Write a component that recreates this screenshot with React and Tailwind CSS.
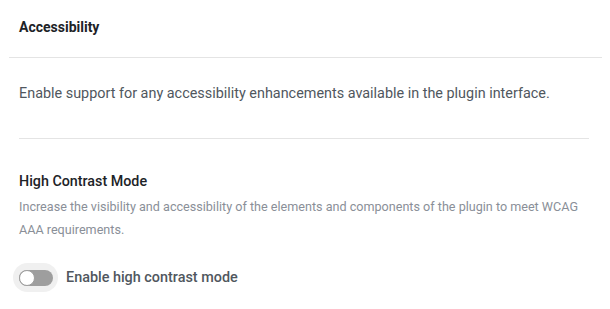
import React, { useState } from "react";

export default function App() {
  const [enabled, setEnabled] = useState(false);

  return (
    <div className="w-[610px] h-[309px] bg-white font-['Roboto',sans-serif] overflow-hidden">
      <div className="ml-[9px] w-[593px]">
        {/* Heading */}
        <div className="h-[58px] border-b border-[#e4e4e4] pl-[10px] pt-[18px]">
          <h2 className="text-[14px] leading-[18px] font-bold text-[#1d2327]">Accessibility</h2>
        </div>

        {/* Body */}
        <div className="pl-[10px] w-[580px]">
          <div className="border-b border-[#e4e4e4] pt-[25px] pb-[33px]">
            <p className="text-[14.4px] leading-[22px] text-[#50575e]">
              Enable support for any accessibility enhancements available in the plugin interface.
            </p>
          </div>

          <div className="pt-[32px] pr-[10px]">
            <h3 className="text-[14.3px] leading-[20px] font-medium text-[#1d2327]">High Contrast Mode</h3>
            <p className="mt-[4px] text-[12.6px] leading-[23px] text-[#8a8f98]">
              Increase the visibility and accessibility of the elements and components of the plugin to meet WCAG AAA requirements.
            </p>

            <label className="mt-[22px] flex items-center gap-[8px] cursor-pointer">
              <span className="-ml-[6px] flex items-center justify-center w-[45px] h-[29px] rounded-full bg-[#f0f0f0]">
                <button
                  onClick={() => setEnabled(!enabled)}
                  className={
                    "relative w-[34px] h-[16px] rounded-full transition " +
                    (enabled ? "bg-[#2271b1]" : "bg-[#9e9e9e]")
                  }
                >
                  <span
                    className={
                      "absolute top-[0px] left-0 w-[16px] h-[16px] rounded-full bg-white border border-[#9e9e9e] transition " +
                      (enabled ? "translate-x-[18px]" : "translate-x-0")
                    }
                  />
                </button>
              </span>
              <span className="text-[14.4px] leading-[20px] font-medium text-[#50575e]">Enable high contrast mode</span>
            </label>
          </div>
        </div>
      </div>
    </div>
  );
}
